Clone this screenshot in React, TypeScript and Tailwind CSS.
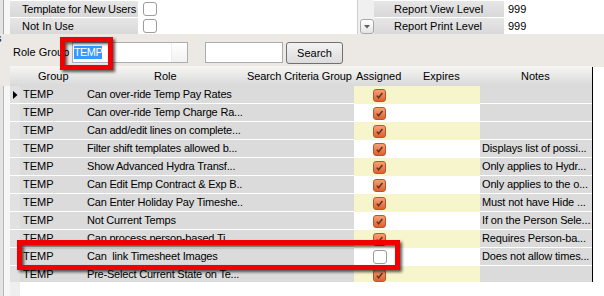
import React from "react";

const rows = [
  { role: "Can over-ride Temp Pay Rates", notes: "", checked: true },
  { role: "Can over-ride Temp Charge Ra...", notes: "", checked: true },
  { role: "Can add/edit lines on complete...", notes: "", checked: true },
  { role: "Filter shift templates allowed b...", notes: "Displays list of possi...", checked: true },
  { role: "Show Advanced Hydra Transf...", notes: "Only applies to Hydr...", checked: true },
  { role: "Can Edit Emp Contract & Exp B...", notes: "Only applies to the o...", checked: true },
  { role: "Can Enter Holiday Pay Timeshe...", notes: "Must not have Hide ...", checked: true },
  { role: "Not Current Temps", notes: "If on the Person Sele...", checked: true },
  { role: "Can process person-based Ti...", notes: "Requires Person-ba...", checked: true },
  { role: "Can\u00a0\u00a0link Timesheet Images", notes: "Does not allow times...", checked: false },
  { role: "Pre-Select Current State on Te...", notes: "", checked: true },
];

function OrangeCheck() {
  return (
    <div className="w-[13px] h-[13px] rounded-[3px] border border-[#B9552B] bg-linear-to-b from-[#F5A072] to-[#DF5F2C] flex items-center justify-center">
      <svg width="9" height="9" viewBox="0 0 9 9">
        <path d="M1.8 4.6 L3.6 6.8 L7.4 2" fill="none" stroke="#5E3424" strokeWidth="1.5" />
      </svg>
    </div>
  );
}

function EmptyCheck() {
  return <div className="w-[14px] h-[14px] rounded-[3px] border border-[#9C9C9C] bg-white" />;
}

function LeftStrip({ top }: { top?: boolean }) {
  return (
    <div className="w-[10px] shrink-0 flex">
      <div className="w-[3px] bg-[#E4E4E4]" />
      <div className={`w-[7px] border-l ${top ? "border-[#A8A8A8] bg-[#F7F7F7]" : "border-[#B8B8B8] bg-[#F6F6F6]"}`} />
    </div>
  );
}

export default function App() {
  return (
    <div className="w-[604px] h-[296px] overflow-hidden relative bg-[#ECE9E5] flex flex-col font-['Liberation_Sans',Arial,sans-serif] text-[11px] text-black leading-none">
      {/* Top section */}
      <div className="h-[34px] flex overflow-hidden shrink-0">
        <LeftStrip top />
        {/* left table */}
        <div className="w-[347px] bg-white flex flex-col">
          <div className="h-[4px] flex border-b border-white">
            <div className="w-[128px] bg-[#D9D9D9]" />
          </div>
          <div className="h-[17px] flex shrink-0 border-b border-white">
            <div className="w-[128px] bg-linear-to-b from-[#E6E6E6] to-[#D8D8D8] pl-[12px] flex items-center whitespace-nowrap tracking-[-0.15px]">Template for New Users</div>
            <div className="pl-[5px] pt-[1px]"><EmptyCheck /></div>
          </div>
          <div className="h-[17px] flex shrink-0">
            <div className="w-[128px] bg-linear-to-b from-[#E6E6E6] to-[#D8D8D8] pl-[12px] flex items-center whitespace-nowrap">Not In Use</div>
            <div className="pl-[5px] pt-[1px]"><EmptyCheck /></div>
          </div>
        </div>
        {/* scroll column */}
        <div className="w-[17px] border-l border-[#CDCDCD] bg-[#F0F0F0] pl-[2px] pt-[19px]">
          <div className="w-[14px] h-[15px] rounded-[3px] border border-[#A8A8A8] bg-linear-to-b from-[#FFFFFF] to-[#E4E4E4] flex items-center justify-center">
            <svg width="6" height="4" viewBox="0 0 6 4"><path d="M0 0 L6 0 L3 3.5 Z" fill="#606060" /></svg>
          </div>
        </div>
        {/* right table */}
        <div className="flex-1 flex flex-col bg-white">
          <div className="h-[4px] bg-[#D9D9D9] border-b border-white" />
          <div className="h-[17px] flex shrink-0 border-b border-white">
            <div className="w-[131px] bg-linear-to-b from-[#E6E6E6] to-[#D8D8D8] pl-[20px] flex items-center whitespace-nowrap border-r border-white">Report View Level</div>
            <div className="pl-[3px] flex items-center">999</div>
          </div>
          <div className="h-[17px] flex shrink-0">
            <div className="w-[131px] bg-linear-to-b from-[#E6E6E6] to-[#D8D8D8] pl-[20px] flex items-center whitespace-nowrap border-r border-white">Report Print Level</div>
            <div className="pl-[3px] flex items-center">999</div>
          </div>
        </div>
      </div>

      {/* Toolbar */}
      <div className="h-[32px] shrink-0 flex items-start pt-[8px]">
        <div className="w-[13px] shrink-0 relative">
          <span className="block -ml-[4px] -mt-[9px]">s</span>
        </div>
        <div className="w-[59px] shrink-0 h-[21px] flex items-center whitespace-nowrap">Role Group</div>
        <div className="w-[116px] h-[21px] border border-[#ABADB3] bg-white flex items-center shrink-0">
          <div className="flex-1 pl-[1px] flex items-center">
            <span className="bg-[#3399FF] text-white px-[0px] py-[1px] tracking-[-0.6px] leading-[11px]">TEMP</span>
          </div>
          <div className="w-[16px] h-full border-l border-[#EDEDED] bg-linear-to-b from-white to-[#F2F2F2]" />
        </div>
        <div className="w-[78px] h-[21px] ml-[17px] border border-[#ABADB3] bg-white shrink-0" />
        <div className="w-[57px] h-[22px] ml-[3px] rounded-[3px] border border-[#707070] bg-linear-to-b from-[#F3F3F3] to-[#DCDCDC] flex items-center justify-center shrink-0">
          Search
        </div>
      </div>

      {/* Header */}
      <div className="h-[20px] shrink-0 flex">
        <div className="w-[10px] shrink-0" />
        <div className="w-[582px] flex bg-linear-to-b from-[#F6F6F4] to-[#D9D9D9] items-center whitespace-nowrap">
          <div className="w-[10px] shrink-0" />
          <div className="w-[60px] shrink-0 pl-[18px]">Group</div>
          <div className="w-[163px] shrink-0 pl-[74px]">Role</div>
          <div className="w-[111px] shrink-0 pl-[4px] tracking-[-0.1px]">Search Criteria Group</div>
          <div className="w-[48px] shrink-0 pl-[2px] overflow-visible">Assigned</div>
          <div className="w-[78px] shrink-0 pl-[21px]">Expires</div>
          <div className="w-[112px] shrink-0 pl-[41px]">Notes</div>
        </div>
        <div className="flex-1 mt-[1px] border-l border-black bg-white" />
      </div>

      {/* Rows */}
      <div className="h-[196px] shrink-0 overflow-hidden flex flex-col">
        {rows.map((r, i) => {
          const even = i % 2 === 0;
          return (
            <div key={i} className="h-[18px] shrink-0 flex whitespace-nowrap">
              <LeftStrip />
              <div className="w-[10px] shrink-0 bg-[#E1E1E1] border-b border-white flex items-center pl-[3px]">
                {i === 0 && (
                  <svg width="5" height="8" viewBox="0 0 5 8"><path d="M0 0 L4.5 4 L0 8 Z" fill="#000" /></svg>
                )}
              </div>
              <div className="w-[60px] shrink-0 bg-[#DBDBDB] border-b border-white pl-[3px] flex items-center">TEMP</div>
              <div className="w-[163px] shrink-0 bg-[#DBDBDB] border-b border-white pl-[7px] flex items-center tracking-[-0.2px]">{r.role}</div>
              <div className="w-[111px] shrink-0 bg-[#DBDBDB] border-b border-white" />
              <div className={`w-[48px] shrink-0 pl-[19px] flex items-center ${even ? "bg-[#F7F5CB]" : "bg-white"}`}>
                {r.checked ? <OrangeCheck /> : <EmptyCheck />}
              </div>
              <div className={`w-[78px] shrink-0 ${even ? "bg-[#F7F5CB]" : "bg-white"}`} />
              <div className="w-[112px] shrink-0 bg-[#DBDBDB] border-b border-white pl-[2px] flex items-center overflow-hidden tracking-[-0.15px]">{r.notes}</div>
              <div className="w-px shrink-0 bg-black" />
              <div className="flex-1 bg-white" />
            </div>
          );
        })}
      </div>

      {/* Bottom */}
      <div className="flex-1 flex bg-white">
        <LeftStrip />
        <div className="w-[10px] bg-[#EFEFEF]" />
        <div className="flex-1 bg-white" />
      </div>

      {/* Annotation rectangles */}
      <div className="absolute left-[60px] top-[37px] w-[53px] h-[33px] border-[5px] border-[#F00000] drop-shadow-[2px_2px_1.5px_rgba(0,0,0,0.65)]" />
      <div className="absolute left-[17px] top-[240px] w-[383px] h-[30px] border-[5px] border-[#F00000] drop-shadow-[2px_2px_1.5px_rgba(0,0,0,0.65)]" />
    </div>
  );
}
